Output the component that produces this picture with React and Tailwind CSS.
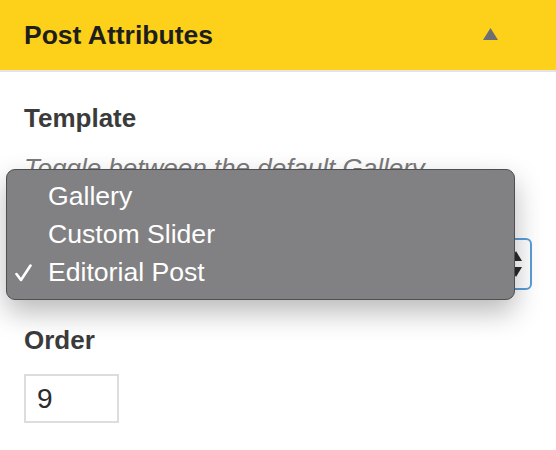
export default function App() {
  const items = ['Gallery', 'Custom Slider', 'Editorial Post']
  return (
    <div className="relative w-[556px] h-[450px] overflow-hidden bg-white font-['Liberation_Sans',Arial,sans-serif]">
      <div className="h-[72px] bg-[#fdd11a] border-b-2 border-[#e4e4e4] flex items-center justify-between pl-6 pr-[58px]">
        <span className="text-[26.5px] font-bold text-[#1e1e1e] leading-8 -mt-[1px]">Post Attributes</span>
        <svg width="15" height="12" viewBox="0 0 15 12" className="-mt-[2px]">
          <path d="M7.5 0 L15 12 L0 12 Z" fill="#6c6e72" />
        </svg>
      </div>

      <div className="px-6">
        <div className="mt-[30px] text-[26px] font-bold leading-8 text-[#3b3b3b]">Template</div>
        <p className="mt-[18px] text-[26px] italic leading-8 text-[#7a7a7a]">
          Toggle between the default Gallery presentation and the Custom Slider.
        </p>
        <div className="mt-[22px] h-[52px] w-[508px] rounded-[6px] border-2 border-[#5b9dd9] flex items-center justify-end pr-[8px]">
          <svg width="12" height="26" viewBox="0 0 12 26">
            <path d="M6 0 L12 10 L0 10 Z" fill="#2a2a2a" />
            <path d="M0 16 L12 16 L6 26 Z" fill="#2a2a2a" />
          </svg>
        </div>

        <div className="mt-[34px] text-[26px] font-bold leading-8 text-[#3b3b3b]">Order</div>
        <div className="mt-[18px] w-[95px] h-[49px] border-2 border-[#dddddd] flex items-center pl-[11px] text-[28px] text-[#2c2c2c]">
          9
        </div>
      </div>

      <div className="absolute left-[6px] top-[169px] w-[509px] h-[131px] rounded-[9px] border border-[#4f4f51] bg-[#818183] shadow-[0_12px_28px_rgba(0,0,0,0.28)] pt-[7px]">
        {items.map((item, i) => (
          <div key={item} className="relative h-[38px] flex items-center pl-[41px] text-[26.6px] text-white leading-none">
            {i === 2 && (
              <svg className="absolute left-[8px] top-[11px]" width="17" height="18" viewBox="0 0 17 18">
                <path d="M1.5 10 L6 16 L15.5 1.5" fill="none" stroke="white" strokeWidth="2.6" strokeLinecap="round" strokeLinejoin="round" />
              </svg>
            )}
            {item}
          </div>
        ))}
      </div>
    </div>
  )
}
